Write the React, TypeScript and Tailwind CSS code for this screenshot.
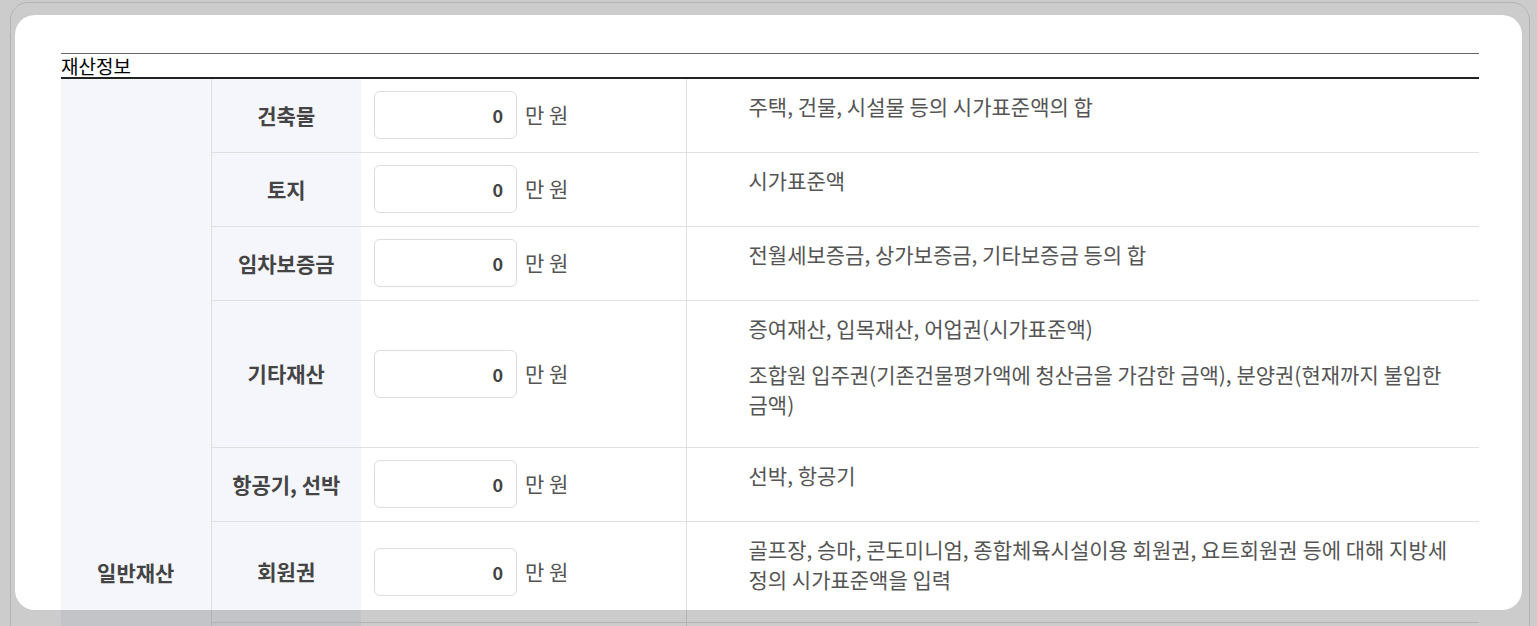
import React from 'react';

interface AssetRow {
  label: string;
  desc: string[];
}

const rows: AssetRow[] = [
  { label: '건축물', desc: ['주택, 건물, 시설물 등의 시가표준액의 합'] },
  { label: '토지', desc: ['시가표준액'] },
  { label: '임차보증금', desc: ['전월세보증금, 상가보증금, 기타보증금 등의 합'] },
  {
    label: '기타재산',
    desc: [
      '증여재산, 입목재산, 어업권(시가표준액)',
      '조합원 입주권(기존건물평가액에 청산금을 가감한 금액), 분양권(현재까지 불입한 금액)',
    ],
  },
  { label: '항공기, 선박', desc: ['선박, 항공기'] },
  {
    label: '회원권',
    desc: ['골프장, 승마, 콘도미니엄, 종합체육시설이용 회원권, 요트회원권 등에 대해 지방세정의 시가표준액을 입력'],
  },
  { label: '예금', desc: ['보통예금, 정기예금, 적금 등의 잔액'] },
  { label: '주식', desc: ['상장주식, 비상장주식의 평가액'] },
  { label: '채권', desc: ['국공채, 회사채 등의 평가액'] },
  { label: '보험', desc: ['저축성 보험의 해약환급금'] },
  { label: '자동차', desc: ['차량 기준가액'] },
  { label: '현금', desc: ['보유 현금'] },
];

const font = { fontFamily: '"Noto Sans CJK KR", "Noto Sans", sans-serif' };

function AmountInput() {
  return (
    <div className="flex items-center">
      <input
        readOnly
        value="0"
        className="w-[143px] h-[48px] rounded-md border border-[#dddddd] bg-white pr-[13px] text-right text-[18px] font-bold text-[#444] outline-none"
      />
      <span className="ml-2 text-[21px] text-[#555]">만 원</span>
    </div>
  );
}

export default function App() {
  return (
    <div className="relative h-[626px] overflow-hidden bg-white" style={font}>
      <div className="ml-[10px] mt-[2px] w-[1520px] rounded-[18px] border border-[#e2e2e2] bg-white p-[50px]">
        <div className="border-t border-[#666] border-b-2 border-b-[#222] text-[19px] leading-[23px] text-black">
          재산정보
        </div>
        <table className="w-full table-fixed border-collapse">
          <colgroup>
            <col className="w-[150px]" />
            <col className="w-[150px]" />
            <col className="w-[325px]" />
            <col />
          </colgroup>
          <tbody>
            {rows.map((row, i) => (
              <tr key={row.label} className="border-b border-[#e0e0e0]">
                {i === 0 && (
                  <th
                    rowSpan={rows.length}
                    className="border-r border-[#e0e0e0] bg-[#f4f6fb] text-[21px] font-bold text-[#444] align-middle"
                  >
                    일반재산
                  </th>
                )}
                <th className="bg-[#f4f6fb] text-[21px] font-bold text-[#444] align-middle">{row.label}</th>
                <td className="pt-3 pb-[13px] pl-[13px] align-middle">
                  <AmountInput />
                </td>
                <td className="border-l border-[#e0e0e0] py-3 pl-[62px] pr-[30px] align-top text-[21px] leading-[30px] text-[#555]">
                  {row.desc.map((d) => (
                    <p key={d} className="mb-4">
                      {d}
                    </p>
                  ))}
                </td>
              </tr>
            ))}
          </tbody>
        </table>
      </div>
      {/* dim everything outside the open card */}
      <div className="pointer-events-none absolute left-[15px] top-[15px] h-[595px] w-[1507px] rounded-[20px] shadow-[0_0_0_3000px_rgba(0,0,0,0.2)]" />
    </div>
  );
}
